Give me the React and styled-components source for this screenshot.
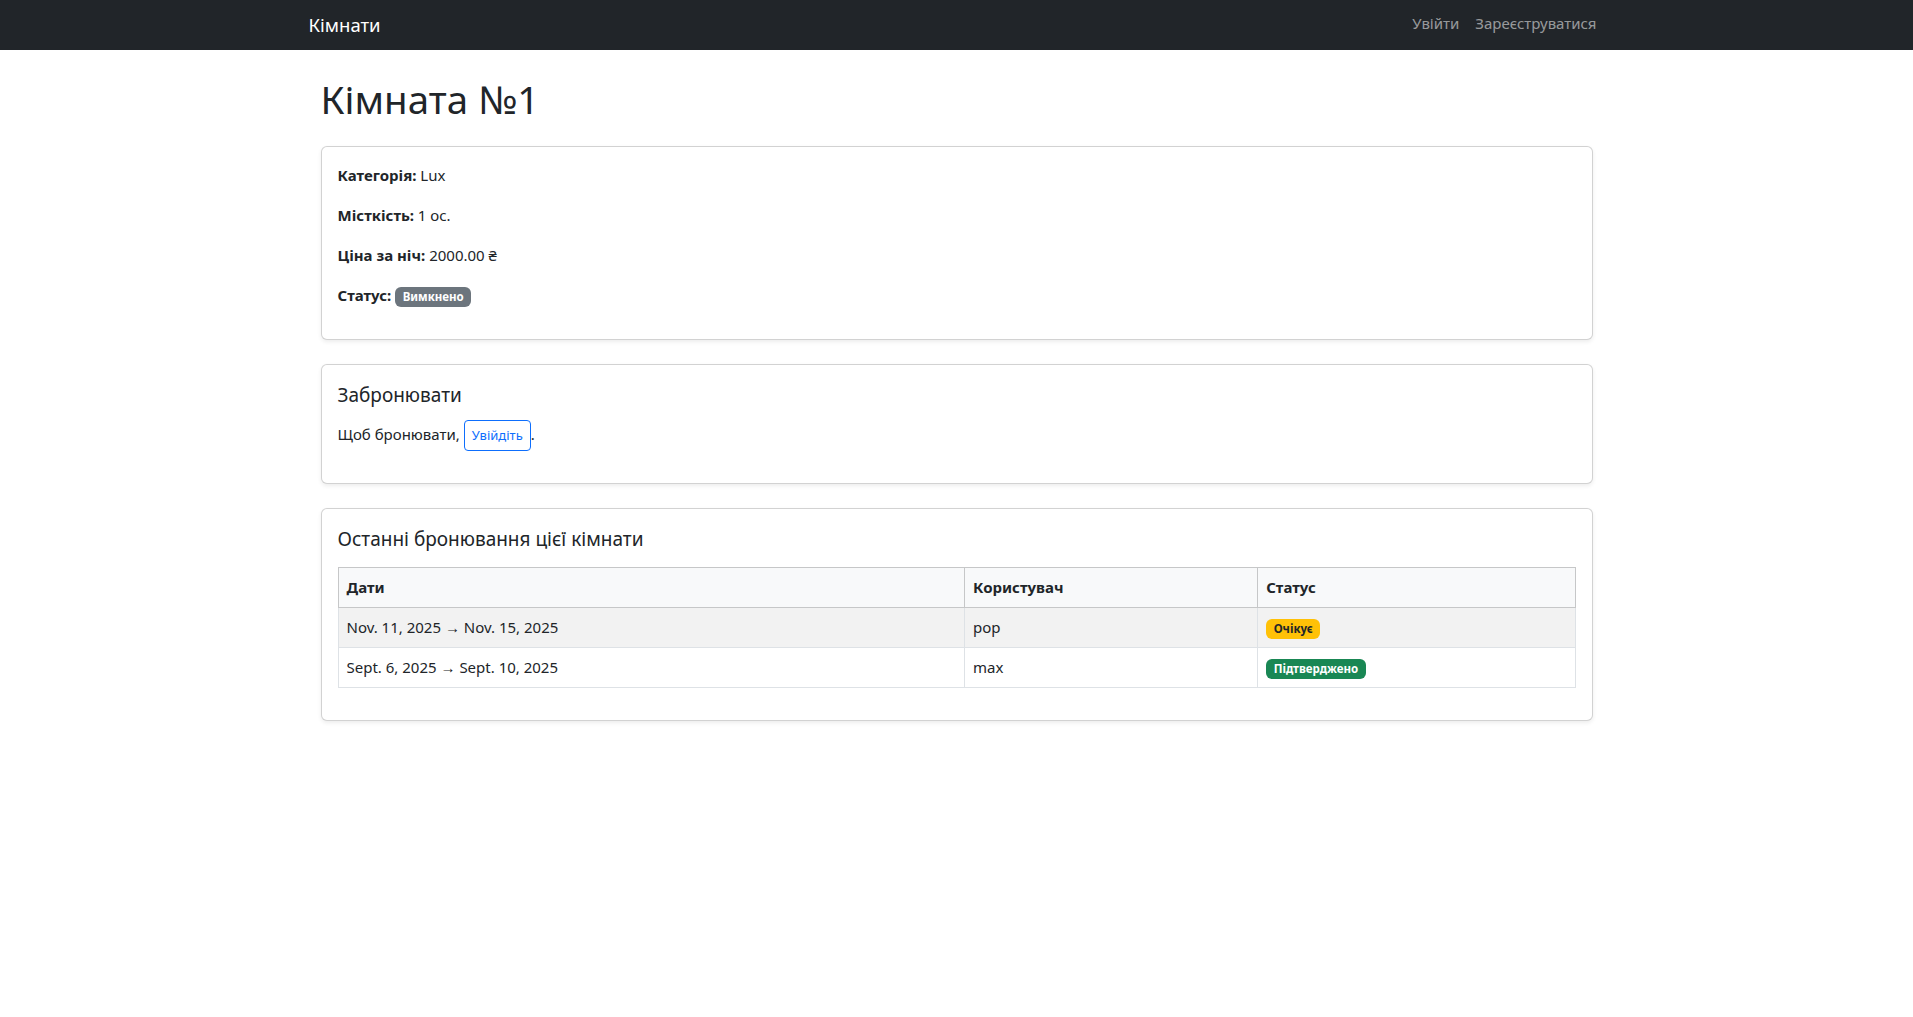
import React from "react";
import styled, { createGlobalStyle } from "styled-components";

const Global = createGlobalStyle`
  * { box-sizing: border-box; }
  html, body { margin: 0; padding: 0; }
  body {
    font-family: "Noto Sans", "Open Sans", Arial, sans-serif;
    font-size: 16px;
    line-height: 1.5;
    color: #212529;
    background: #fff;
  }
`;

const Nav = styled.nav`
  background: #212529;
  height: 50px;
  display: flex;
  align-items: center;
`;

const Container = styled.div`
  width: 100%;
  max-width: 1320px;
  margin: 0 auto;
  padding: 0 12px;
`;

const NavInner = styled(Container)`
  display: flex;
  align-items: center;
  justify-content: space-between;
`;

const Brand = styled.a`
  color: #fff;
  font-size: 18.5px;
  line-height: 30px;
  text-decoration: none;
`;

const NavLinks = styled.div`
  display: flex;
  align-items: center;
  margin-top: -3px;
`;

const NavLink = styled.a`
  color: rgba(255, 255, 255, 0.55);
  font-size: 15px;
  padding: 8px 8px;
  text-decoration: none;
`;

const Main = styled(Container)`
  margin-top: 24px;
`;

const Inner = styled.div`
  padding: 0 12px;
`;

const Title = styled.h1`
  font-size: 38.5px;
  font-weight: 400;
  line-height: 1.2;
  margin: 0 0 24px;
  padding-top: 2px;
`;

const Card = styled.section`
  border: 1px solid rgba(0, 0, 0, 0.175);
  border-radius: 6px;
  box-shadow: 0 2px 4px rgba(0, 0, 0, 0.075);
  background: #fff;
  padding: 16px;
  margin-bottom: 24px;
`;

const P = styled.p`
  margin: 0 0 16px;
  font-size: 15px;
  line-height: 24px;
`;

const B = styled.strong`
  font-weight: 700;
`;

const CardTitle = styled.h5`
  font-size: 19px;
  font-weight: 400;
  line-height: 24px;
  margin: 0 0 ${(p) => p.$mb}px;
  padding-top: 2px;
`;

const Badge = styled.span`
  display: inline-block;
  padding: 0.35em 0.65em;
  font-size: 11.5px;
  font-weight: 700;
  line-height: 1;
  border-radius: 6px;
  color: ${(p) => p.$fg || "#fff"};
  background: ${(p) => p.$bg};
  vertical-align: baseline;
  white-space: nowrap;
`;

const OutlineBtn = styled.a`
  display: inline-block;
  padding: 4px 7px;
  font-size: 13px;
  line-height: 21px;
  color: #0d6efd;
  border: 1px solid #0d6efd;
  border-radius: 4px;
  text-decoration: none;
  vertical-align: middle;
`;

const Table = styled.table`
  width: 100%;
  border-collapse: collapse;
  margin-bottom: 16px;
  font-size: 15px;
`;

const Th = styled.th`
  text-align: left;
  font-weight: 700;
  background: #f8f9fa;
  border: 1px solid #c6c7c8;
  padding: 8px;
  line-height: 23px;
  width: ${(p) => p.$w};
`;

const Tr = styled.tr`
  background: ${(p) => (p.$striped ? "#f2f2f2" : "#fff")};
`;

const Td = styled.td`
  border: 1px solid #dee2e6;
  padding: 8px;
  line-height: 23px;
`;

const bookings = [
  { dates: "Nov. 11, 2025 → Nov. 15, 2025", user: "pop", status: "Очікує", bg: "#ffc107", fg: "#212529" },
  { dates: "Sept. 6, 2025 → Sept. 10, 2025", user: "max", status: "Підтверджено", bg: "#198754", fg: "#fff" },
];

export default function App() {
  return (
    <>
      <Global />
      <Nav>
        <NavInner>
          <Brand href="#">Кімнати</Brand>
          <NavLinks>
            <NavLink href="#">Увійти</NavLink>
            <NavLink href="#">Зареєструватися</NavLink>
          </NavLinks>
        </NavInner>
      </Nav>
      <Main>
        <Inner>
          <Title>Кімната №1</Title>
          <Card>
            <P><B>Категорія:</B> Lux</P>
            <P><B>Місткість:</B> 1 ос.</P>
            <P><B>Ціна за ніч:</B> 2000.00 ₴</P>
            <P><B>Статус:</B> <Badge $bg="#6c757d">Вимкнено</Badge></P>
          </Card>
          <Card>
            <CardTitle $mb={13}>Забронювати</CardTitle>
            <P>Щоб бронювати, <OutlineBtn href="#">Увійдіть</OutlineBtn>.</P>
          </Card>
          <Card>
            <CardTitle $mb={16}>Останні бронювання цієї кімнати</CardTitle>
            <Table>
              <thead>
                <tr>
                  <Th $w="50.65%">Дати</Th>
                  <Th $w="23.7%">Користувач</Th>
                  <Th>Статус</Th>
                </tr>
              </thead>
              <tbody>
                {bookings.map((b, i) => (
                  <Tr key={i} $striped={i % 2 === 0}>
                    <Td>{b.dates}</Td>
                    <Td>{b.user}</Td>
                    <Td><Badge $bg={b.bg} $fg={b.fg}>{b.status}</Badge></Td>
                  </Tr>
                ))}
              </tbody>
            </Table>
          </Card>
        </Inner>
      </Main>
    </>
  );
}
